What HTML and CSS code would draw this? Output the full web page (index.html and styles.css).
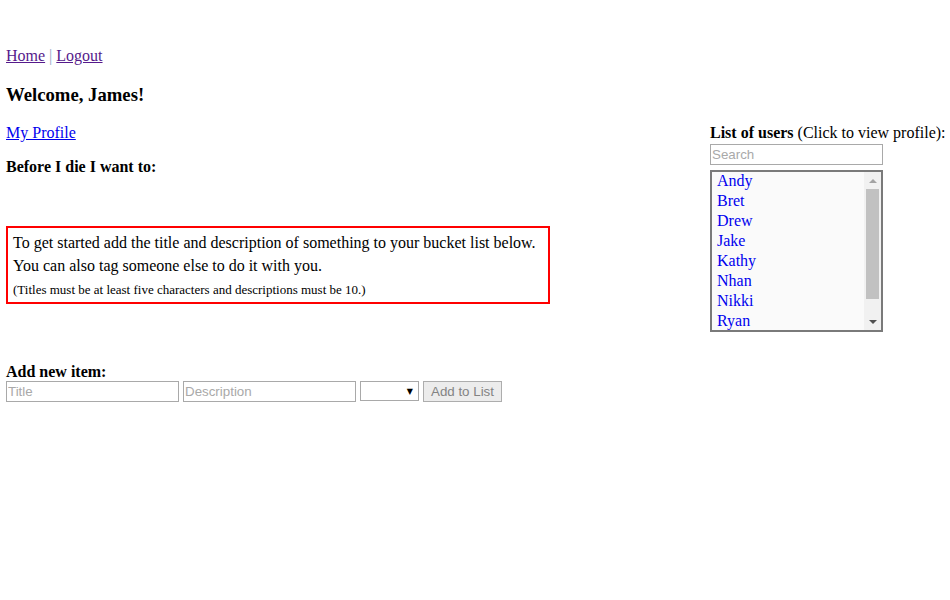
FILE: index.html
```html
<!DOCTYPE html>
<html>
<head>
<meta charset="utf-8">
<link rel="stylesheet" href="styles.css">
</head>
<body>
<div class="nav"><a href="#" class="visited">Home</a> <span class="sep">|</span> <a href="#" class="visited">Logout</a></div>
<h3 class="welcome">Welcome, James!</h3>
<div class="main">
  <div class="left">
    <p class="profile"><a href="#">My Profile</a></p>
    <p class="before">Before I die I want to:</p>
    <div class="notice">
      <p class="line">To get started add the title and description of something to your bucket list below.</p>
      <p class="line">You can also tag someone else to do it with you.</p>
      <p class="small">(Titles must be at least five characters and descriptions must be 10.)</p>
    </div>
    <p class="add-title">Add new item:</p>
    <form class="add-form">
      <input class="field" type="text" placeholder="Title">
      <input class="field" type="text" placeholder="Description">
      <div class="select"><span class="arrow">&#9660;</span></div>
      <button class="btn" type="button" disabled>Add to List</button>
    </form>
  </div>
  <div class="right">
    <p class="users-title"><b>List of users</b> (Click to view profile):</p>
    <input class="field search" type="text" placeholder="Search">
    <div class="listbox">
      <ul class="users">
        <li>Andy</li>
        <li>Bret</li>
        <li>Drew</li>
        <li>Jake</li>
        <li>Kathy</li>
        <li>Nhan</li>
        <li>Nikki</li>
        <li>Ryan</li>
      </ul>
      <div class="scrollbar">
        <div class="sb-up"></div>
        <div class="sb-track"><div class="sb-thumb"></div></div>
        <div class="sb-down"></div>
      </div>
    </div>
  </div>
</div>
</body>
</html>
```

FILE: styles.css
```css
html, body {
  margin: 0;
  padding: 0;
  background: #fff;
}
body {
  font-family: "Liberation Serif", "Times New Roman", serif;
  font-size: 16px;
  color: #000;
  padding: 47px 6px 0 6px;
}
a {
  color: #0000ee;
}
a.visited {
  color: #551a8b;
}
.nav {
  line-height: 18px;
}
.sep {
  color: #8fa8c8;
}
.welcome {
  font-size: 18.72px;
  margin: 19px 0 18px 0;
  line-height: 22px;
}
.main {
  display: flex;
}
.left {
  width: 704px;
  flex-shrink: 0;
}
.right {
  flex: 1;
  white-space: nowrap;
}
.profile {
  margin: 0;
  line-height: 18px;
}
.before {
  margin: 16px 0 0 0;
  font-weight: bold;
  line-height: 18px;
}
.notice {
  margin-top: 50px;
  width: 530px;
  border: 2px solid #ff0000;
  padding: 3px 5px 2px 5px;
}
.notice .line {
  margin: 0;
  line-height: 23px;
}
.notice .small {
  margin: 0;
  padding-top: 2px;
  font-size: 13px;
  line-height: 21px;
}
.add-title {
  margin: 59px 0 0 0;
  font-weight: bold;
  line-height: 18px;
}
.add-form {
  display: flex;
  gap: 4px;
  align-items: flex-start;
}
.field {
  box-sizing: border-box;
  width: 173px;
  height: 21px;
  border: 1px solid #a9a9a9;
  padding: 0 1px;
  margin: 0;
  font-family: "Liberation Sans", Arial, sans-serif;
  font-size: 13.33px;
  background: #fff;
  outline: none;
}
.field::placeholder {
  color: #a9a9a9;
}
.select {
  box-sizing: border-box;
  width: 59px;
  height: 20px;
  border: 1px solid #a9a9a9;
  background: #fff;
  display: flex;
  justify-content: flex-end;
  align-items: center;
  padding-right: 5px;
}
.arrow {
  font-family: "DejaVu Sans", sans-serif;
  font-size: 8px;
  color: #000;
}
.btn {
  box-sizing: border-box;
  height: 21px;
  width: 79px;
  margin: 0;
  padding: 0 6px;
  border: 1px solid #adadad;
  background: #ececec;
  color: #838383;
  font-family: "Liberation Sans", Arial, sans-serif;
  font-size: 13.33px;
}
.users-title {
  margin: 0;
  line-height: 18px;
}
.search {
  display: block;
  margin-top: 2px;
}
.listbox {
  box-sizing: border-box;
  margin-top: 5px;
  width: 173px;
  height: 162px;
  border: 2px solid #7a7a7a;
  background: #fafafa;
  display: flex;
  overflow: hidden;
}
.users {
  list-style: none;
  margin: 0;
  padding: 0 0 0 5px;
  flex: 1;
  color: #0000ee;
}
.users li {
  height: 20px;
  line-height: 18px;
}
.scrollbar {
  width: 17px;
  background: #f1f1f1;
  display: flex;
  flex-direction: column;
}
.sb-up, .sb-down {
  height: 17px;
  display: flex;
  align-items: center;
  justify-content: center;
}
.sb-up::before {
  content: "";
  border-left: 4px solid transparent;
  border-right: 4px solid transparent;
  border-bottom: 4px solid #a3a3a3;
}
.sb-down::before {
  content: "";
  border-left: 4px solid transparent;
  border-right: 4px solid transparent;
  border-top: 4px solid #505050;
}
.sb-track {
  flex: 1;
  padding: 0 2px;
}
.sb-thumb {
  height: 110px;
  background: #c1c1c1;
}
```
